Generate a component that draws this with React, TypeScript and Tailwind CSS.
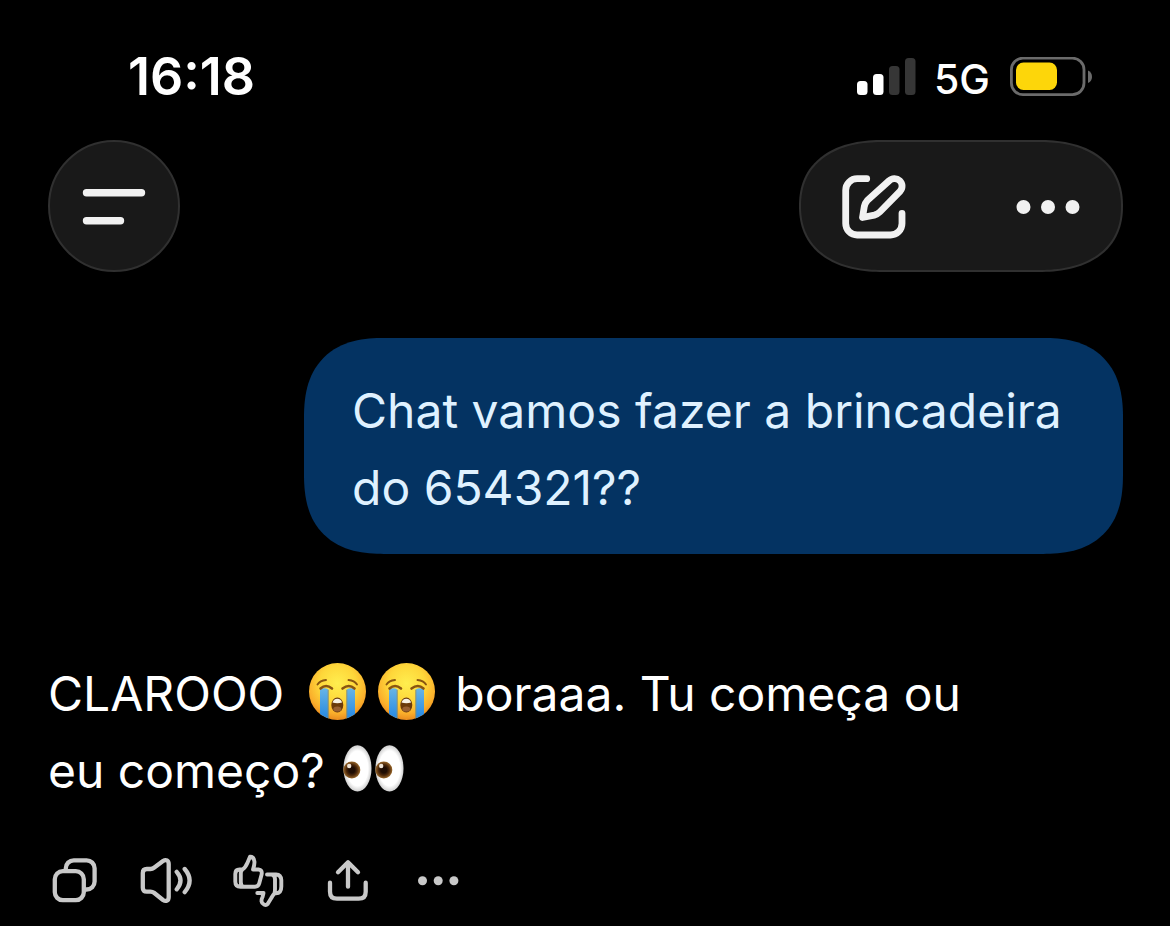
import type { ReactNode } from "react";

function SignalBars() {
  return (
    <svg className="h-10 w-[59px]" viewBox="0 0 59 40" role="img" aria-label="Sinal">
      <rect x="0" y="24" width="10.5" height="14" rx="3.500" fill="#fff" />
      <rect x="16" y="17" width="10.5" height="21" rx="3.500" fill="#fff" />
      <rect x="32" y="9" width="10.5" height="29" rx="3.500" fill="#363636" />
      <rect x="48" y="1" width="10.5" height="37" rx="3.500" fill="#363636" />
    </svg>
  );
}

function Battery() {
  return (
    <svg className="h-10 w-[83px]" viewBox="0 0 83 40" role="img" aria-label="Bateria">
      <rect x="1.4" y="1.2" width="72.6" height="36.4" rx="11.500" fill="none" stroke="#6b6b6b" strokeWidth="2.8" />
      <rect x="6" y="5.500" width="41" height="27.5" rx="7.500" fill="#fdd60a" />
      <path d="M78 13.5c2.700 1 4 3.300 4 6.200s-1.300 5.200-4 6.200z" fill="#6b6b6b" />
    </svg>
  );
}

function MenuIcon() {
  return (
    <svg className="h-16 w-16" viewBox="0 0 64 64" fill="none" stroke="#f1f1f1" strokeWidth="7.4" strokeLinecap="round">
      <path d="M4.500 18.700H59.500M4.500 46.700H38.500" />
    </svg>
  );
}

function ComposeIcon() {
  return (
    <svg
      className="h-[68px] w-[68px]"
      viewBox="-1 -1 68 68"
      fill="none"
      stroke="#f1f1f1"
      strokeWidth="6.800"
      strokeLinecap="round"
      strokeLinejoin="round"
    >
      <path d="M26.700 5.700H17.200A11.500 11.500 0 0 0 5.700 17.200V50.500A11.500 11.500 0 0 0 17.200 62H50.500A11.500 11.500 0 0 0 62 50.500V40.300" />
      <path d="M22.500 44.500L24.300 33.500Q25 30 27.500 27.200L49 7.900A7.300 7.300 0 0 1 60 18.300L39.800 39Q37.500 41.300 34.300 42.100Z" />
    </svg>
  );
}

function MoreIcon() {
  return (
    <svg className="h-[68px] w-[68px]" viewBox="1 -1 68 68" fill="#f1f1f1">
      <circle cx="9.500" cy="34" r="7" />
      <circle cx="34" cy="34" r="7" />
      <circle cx="58.500" cy="34" r="7" />
    </svg>
  );
}

function CryingFace() {
  return (
    <svg className="mr-[4px] ml-[8px] inline-block h-[57px] w-[57px] align-[-9px]" viewBox="0 0 57 57" role="img" aria-label="😭">
      <defs>
        <radialGradient id="face" cx="0.5" cy="0.36" r="0.64">
          <stop offset="0" stopColor="#ffee4f" />
          <stop offset="0.5" stopColor="#fed73a" />
          <stop offset="0.82" stopColor="#faae2b" />
          <stop offset="1" stopColor="#e98a1f" />
        </radialGradient>
        <linearGradient id="tear" x1="0" y1="0" x2="0" y2="1">
          <stop offset="0" stopColor="#68b5e6" />
          <stop offset="1" stopColor="#2386e2" />
        </linearGradient>
        <clipPath id="disc">
          <circle cx="28.500" cy="28.500" r="28.500" />
        </clipPath>
      </defs>
      <circle cx="28.500" cy="28.500" r="28.500" fill="url(#face)" />
      <g clipPath="url(#disc)">
        <path d="M11 26.500Q15 24 19.500 26.500V57H11ZM37.500 26.500Q42 24 46 26.500V57H37.500Z" fill="url(#tear)" />
        <path d="M19.200 27V56M37.800 27V56" stroke="#9c8d55" strokeWidth="0.800" fill="none" />
      </g>
      <path d="M8.500 21.500Q11 17.500 17 17M39.500 17Q45.500 17.500 48 21.500" fill="none" stroke="#895511" strokeWidth="1.900" strokeLinecap="round" />
      <path d="M11.500 25.500Q17 20.500 23 25.500M33.500 25.500Q40 20.500 45.500 25.500" fill="none" stroke="#895511" strokeWidth="2.600" strokeLinecap="round" />
      <ellipse cx="28.300" cy="42" rx="6" ry="7.400" fill="#6b3a0b" />
      <path d="M23.500 39.500Q24.500 35.700 28.300 35.700T33.100 39.500Q28.300 41 23.500 39.500Z" fill="#f7f2e6" />
      <ellipse cx="28.300" cy="46" rx="4" ry="2.600" fill="#986033" />
    </svg>
  );
}

function Eyes() {
  return (
    <svg className="ml-[5px] inline-block h-[47px] w-[61px] align-[-4px]" viewBox="0 0 61 47" role="img" aria-label="👀">
      <defs>
        <radialGradient id="white" cx="0.5" cy="0.5" r="0.5">
          <stop offset="0.75" stopColor="#fff" />
          <stop offset="1" stopColor="#cfcfcf" />
        </radialGradient>
        <radialGradient id="iris" cx="0.5" cy="0.5" r="0.5">
          <stop offset="0.35" stopColor="#1f0d03" />
          <stop offset="0.65" stopColor="#4f2a0b" />
          <stop offset="1" stopColor="#9a692c" />
        </radialGradient>
      </defs>
      {[0, 32].map((x) => (
        <g key={x} transform={`translate(${x} 0)`}>
          <ellipse cx="14.500" cy="23.400" rx="14" ry="23.200" fill="url(#white)" />
          <circle cx="8.800" cy="25" r="8.500" fill="url(#iris)" />
          <circle cx="6.200" cy="21" r="2.200" fill="#eee3d6" />
        </g>
      ))}
    </svg>
  );
}

function ActionIcon({ children }: { children: ReactNode }) {
  return (
    <svg
      className="h-14 w-14"
      viewBox="0 0 56 56"
      fill="none"
      stroke="#c9c9c9"
      strokeWidth="4.300"
      strokeLinecap="round"
      strokeLinejoin="round"
    >
      {children}
    </svg>
  );
}

const actions = [
  {
    label: "Copiar",
    icon: (
      <>
        <rect x="6.800" y="19.200" width="29" height="29" rx="8" />
        <path d="M17.800 18.500V16.300A8 8 0 0 1 25.800 8.300H38.600A8 8 0 0 1 46.600 16.300V29.500A8 8 0 0 1 38.600 37.500H37" />
      </>
    ),
  },
  {
    label: "Ouvir",
    icon: (
      <g transform="translate(-2 0.500)">
        <path d="M4.800 20.500Q4.800 16.500 8.800 16.500H12.500Q14.500 16.500 16 15.300L25 8.500C28 6.500 30.700 7.800 30.700 11.500V44.500C30.700 48.200 28 49.500 25 47.500L16 40.300Q14.500 39.200 12.500 39.200H8.800Q4.800 39.200 4.800 35.200Z" />
        <path d="M38.700 19.300Q46.300 28 38.700 36.800M46.700 16.500Q56.500 28 46.700 39.700" />
      </g>
    ),
  },
  {
    label: "Avaliar",
    icon: (
      <g strokeWidth="3.900" transform="translate(-2 0)">
        <path d="M12.500 17.500H9.500Q5.300 17.500 5.300 22V29.500Q5.300 34.700 10.500 34.700H25Q28.300 34.700 29.200 31.500L31.600 22.500Q32.500 17.800 28.500 17.500H23C24 14.500 24.700 12 24.400 9.500C24 6 22.200 4.700 20 4.800L17.600 10.500Q15.500 15.500 12.500 17.500Q10.800 18.500 10.800 21.500V30Q10.800 33.500 13 34.700" />
        <path d="M37 22.500H46Q51 22.800 51.300 28V34.500Q51.300 41.300 46 41.300H44.500Q42.800 43 41 46.500L37.500 52.200Q36.200 53.500 34 52.500C30.800 51 31 48 32.500 45L33.500 41H27.300M41.500 22.500Q45 23.500 45 27V37Q45 39.500 44.500 41.300" />
      </g>
    ),
  },
  {
    label: "Compartilhar",
    icon: <path d="M6 30.700V39.700Q6 46.700 13 46.700H34.700Q41.700 46.700 41.700 39.700V30.700M24 34.700V10.300M14 20.300L24 10.300L34 20.300" />,
  },
  {
    label: "Mais opções",
    icon: (
      <g fill="#c9c9c9" stroke="none">
        <circle cx="6.500" cy="28.700" r="4.500" />
        <circle cx="22.200" cy="28.700" r="4.500" />
        <circle cx="37.900" cy="28.700" r="4.500" />
      </g>
    ),
  },
];

export default function App() {
  return (
    <div className="min-h-screen bg-black px-12 pt-12 font-['Inter',sans-serif] text-white">
      <div className="flex h-[58px] items-center justify-between pr-[29px] pl-20">
        <time className="text-[52px] leading-[58px] font-semibold">16:18</time>
        <div className="flex items-center">
          <SignalBars />
          <span className="mr-5 ml-[18px] pt-1 text-[41px] leading-[54px] font-medium">5G</span>
          <Battery />
        </div>
      </div>

      <header className="mt-[34px] -mr-px flex justify-between">
        <button
          type="button"
          aria-label="Menu"
          className="flex h-[132px] w-[132px] items-center justify-center rounded-full border-2 border-[#303030] bg-[#191919]"
        >
          <MenuIcon />
        </button>
        <div className="flex h-[132px] w-[324px] items-center justify-between rounded-[84px/66px] border-2 border-[#303030] bg-[#191919] px-[38px] [corner-shape:superellipse(1.2)]">
          <button type="button" aria-label="Nova conversa">
            <ComposeIcon />
          </button>
          <button type="button" aria-label="Mais">
            <MoreIcon />
          </button>
        </div>
      </header>

      <main className="text-[48px] leading-[77px]">
        <div className="mt-[66px] -mr-px flex justify-end">
          <p className="w-[819px] rounded-[80px] bg-[#043362] pt-[34px] pr-10 pb-7 pl-12 text-[#dff1ff] [corner-shape:superellipse(1.3)]">
            Chat vamos fazer a brincadeira do 654321??
          </p>
        </div>

        <p className="mt-[101px] max-w-[960px]">
          CLAROOO{" "}
          <span className="mx-[3px]">
            <CryingFace />
            <CryingFace />
          </span>{" "}
          boraaa. Tu começa ou
          <br />
          eu começo? <Eyes />
        </p>

        <div className="mt-[43px] flex gap-9">
          {actions.map((action) => (
            <button key={action.label} type="button" aria-label={action.label} className="h-14 w-14">
              <ActionIcon>{action.icon}</ActionIcon>
            </button>
          ))}
        </div>
      </main>
    </div>
  );
}
